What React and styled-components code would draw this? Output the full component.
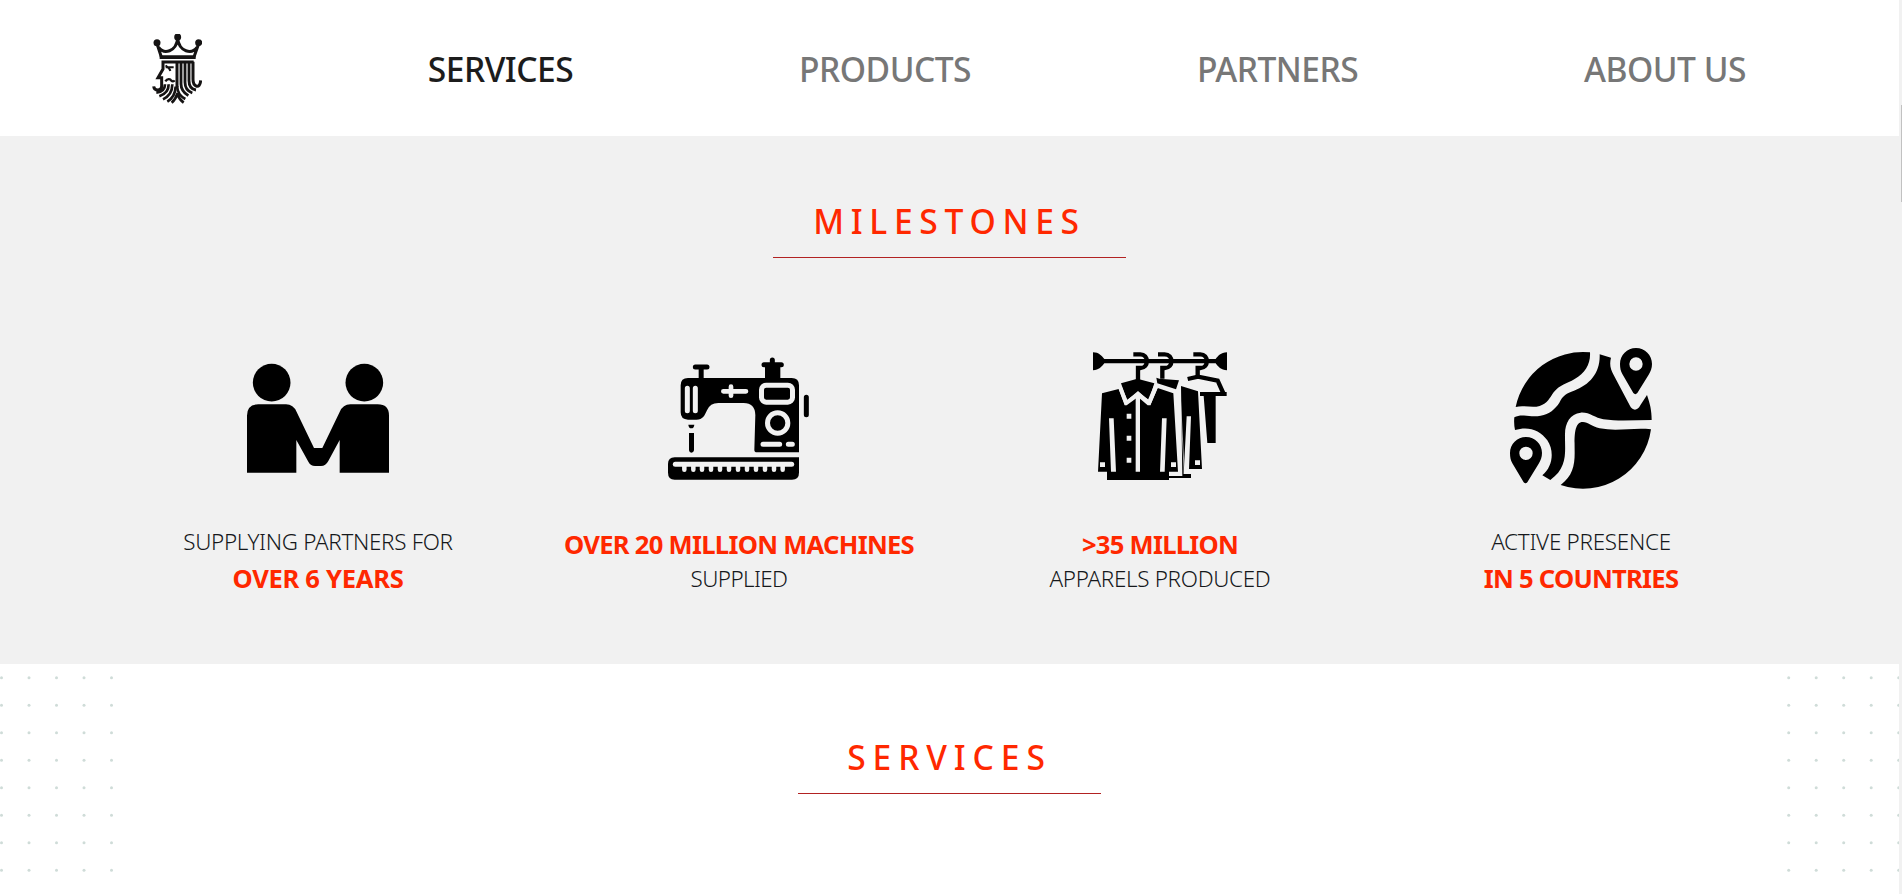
import React from "react";
import styled, { createGlobalStyle } from "styled-components";

const GlobalStyle = createGlobalStyle`
  * { box-sizing: border-box; }
  html, body { margin: 0; background: #fff; overflow: hidden; }
  body { font-family: "Noto Sans", "Open Sans", sans-serif; color: #15181b; }
`;

const Shell = styled.div`
  display: flex;
  width: 100%;
  height: 894px;
  overflow: hidden;
`;

const Page = styled.div`
  flex: 1;
  min-width: 0;
`;

const ScrollTrack = styled.div`
  width: 3px;
  flex: none;
  display: flex;
  justify-content: flex-end;
  padding-top: 105px;
  background: #f1f1f1;
`;

const ScrollThumb = styled.div`
  width: 1px;
  height: 97px;
  background: #c1c1c1;
`;

const Header = styled.header`
  display: flex;
  align-items: center;
  justify-content: space-between;
  height: 136px;
  padding: 2px 153px 0 152px;
  background: #fff;
`;

const NavLink = styled.a`
  font-size: 33.6px;
  font-weight: 500;
  line-height: 50px;
  letter-spacing: -0.5px;
  white-space: nowrap;
  color: ${(p) => (p.$active ? "#1c1c1c" : "#777")};
`;

const LogoSvg = styled.svg`
  display: block;
  width: 50px;
  height: 70px;
  flex: none;
`;

const Milestones = styled.section`
  display: flex;
  flex-direction: column;
  align-items: center;
  height: 528px;
  padding-top: 60px;
  background: #f1f1f1;
`;

const Title = styled.h2`
  width: ${(p) => p.$width}px;
  margin: 0;
  padding-bottom: 11px;
  border-bottom: 1px solid #b22222;
  font-size: 33.6px;
  font-weight: 500;
  line-height: 50px;
  letter-spacing: ${(p) => p.$spacing}px;
  text-align: center;
  white-space: nowrap;
  color: #ff2800;
`;

const Grid = styled.div`
  display: grid;
  grid-template-columns: repeat(4, 421px);
  margin-top: 82px;
`;

const Card = styled.div`
  display: flex;
  flex-direction: column;
  align-items: center;
`;

const IconSvg = styled.svg`
  display: block;
  width: 180px;
  height: 160px;
  margin-bottom: 26px;
`;

const Caption = styled.div`
  font-size: 22.4px;
  font-weight: 300;
  line-height: 32px;
  letter-spacing: ${(p) => p.$spacing ?? -0.3}px;
  white-space: nowrap;
`;

const Figure = styled.div`
  padding-top: ${(p) => (p.$second ? 3 : 1)}px;
  font-size: 25.6px;
  font-weight: 700;
  line-height: 36px;
  letter-spacing: ${(p) => p.$spacing}px;
  white-space: nowrap;
  color: #ff2800;
`;

const Services = styled.section`
  display: flex;
  justify-content: space-between;
  height: 230px;
  background: #fff;
`;

const ServicesBody = styled.div`
  flex: 1;
  display: flex;
  justify-content: center;
  align-items: flex-start;
  padding-top: 68px;
`;

const DotSvg = styled.svg`
  display: block;
  width: 115px;
  height: 230px;
  flex: none;
`;

const STEP = 27.5;

function Dots({ start }) {
  const dots = [];
  for (let r = 0; r < 8; r++)
    for (let c = 0; c < 5; c++)
      dots.push(<circle key={r + "-" + c} cx={start + c * STEP} cy={13.8 + r * STEP} r="1.5" />);
  return (
    <DotSvg viewBox="0 0 115 230" fill="#cfdcd8">
      {dots}
    </DotSvg>
  );
}

function Logo() {
  return (
    <LogoSvg viewBox="38 30 150 210" fill="none" stroke="#151313">
      <g fill="#151313" stroke="none">
        <circle cx="53" cy="56" r="10.5" />
        <circle cx="115" cy="39" r="10.5" />
        <circle cx="178" cy="56" r="10.5" />
        <path d="M61 94H169V105H61Z" />
      </g>
      <path d="M54 62L66 99M177 62L164 99M58 70C74 92 110 84 115 44C120 84 157 92 173 70" strokeWidth="9" />
      <path d="M163 114H71V135L56 161H67V187C66 202 45 202 43 187" strokeWidth="9" />
      <path d="M79 130H103M79 124C84 130 91 133 93 141" strokeWidth="6" />
      <path d="M78 172C84 163 93 164 96 170C99 173 103 173 106 169" strokeWidth="7" />
      <path d="M113 115V190" strokeWidth="9" />
      <path d="M125 115V180C125 198 134 207 147 215" strokeWidth="8.5" />
      <path d="M137 115V175C137 192 147 203 159 207" strokeWidth="8.5" />
      <path d="M149 115V170C149 187 157 196 170 198" strokeWidth="8.5" />
      <path d="M161 113V166C161 189 182 197 184 169" strokeWidth="9" />
      <path d="M77 181C77 194 69 204 51 206" strokeWidth="8" />
      <path d="M88 181C88 200 78 211 60 217" strokeWidth="8" />
      <path d="M99 181C99 204 88 218 71 226" strokeWidth="8" />
      <path d="M109 188C108 211 99 224 84 233" strokeWidth="8" />
      <path d="M113 186C115 208 123 217 138 225M115 207C110 223 104 230 97 236M115 211C119 224 126 231 133 236" strokeWidth="8" />
    </LogoSvg>
  );
}

function PeopleIcon() {
  return (
    <IconSvg viewBox="-6 -30 540 480">
      <circle cx="125" cy="98" r="56.5" />
      <circle cx="403" cy="98" r="56.5" />
      <path d="M51 368V197Q51 163 85 163H168Q190 163 200 186L252 294H277L329 186Q339 163 361 163H443Q477 163 477 197V368H329V270L295 333Q287 348 273 348H255Q242 348 235 335L199 270V368Z" />
    </IconSvg>
  );
}

function SewingIcon() {
  return (
    <IconSvg viewBox="-18 -15 540 480">
      <path d="M121 66H156M327 59H379M352 45V60M454 157V209" stroke="#000" strokeWidth="15" strokeLinecap="round" />
      <path d="M131 66H146V102H131ZM330 60H376V102H330Z" />
      <path d="M99 99H410Q432 99 432 121V322H306Q298 322 298 314L301 210Q300 174 266 174H190Q165 174 156 196C148 213 144 224 124 224H99Q77 224 77 202V121Q77 99 99 99Z" />
      <path d="M100 239H118Q117 250 109 250Q101 250 100 239ZM102 264H117V316Q116 323 109 323Q103 323 102 316Z" />
      <path d="M59 337H432V383Q432 404 411 404H59Q39 404 39 383V357Q39 337 59 337Z" />
      <g stroke="#f1f1f1" fill="none" strokeLinecap="round">
        <path d="M97 130V197M121 130V197" strokeWidth="15" />
        <path d="M205 139H273M228 125V152" strokeWidth="14" />
        <rect x="319.500" y="120.500" width="93" height="51" rx="14" strokeWidth="15" />
        <circle cx="368" cy="234" r="30.500" strokeWidth="15" />
        <path d="M324 298H374M400 298H412" strokeWidth="15" />
        <path d="M61 358H410" strokeWidth="15" />
        <path d="M88 362V374M115 362V374M141 362V374M168 362V374M195 362V374M222 362V374M249 362V374M276 362V374M303 362V374M330 362V374M357 362V374M383 362V374" strokeWidth="13.500" />
      </g>
    </IconSvg>
  );
}

function ClothesIcon() {
  return (
    <IconSvg viewBox="-30 0 540 480">
      <path d="M39 37C57 37 65 48 73 57H407C414 48 422 38 441 37V91C423 90 414 80 407 70H73C65 80 57 90 39 91Z" />
      <g fill="none" stroke="#000" strokeWidth="13">
        <path d="M160 43H181C207 43 207 84 181 84H174V120" />
        <path d="M234 43H254C281 43 281 84 254 84H247V116" />
        <path d="M340 43H361C387 43 387 84 361 84H353V108" />
        <path d="M323 117L354 110L413 122L431 162" />
      </g>
      <path d="M360 156H440V168H407V309H382L371 168H360Z" />
      <path d="M303 138L354 154L366 387H327L333 229H320L311 402H333V414H267V408H307Z" />
      <path d="M229 113L238 116L297 121L288 148L232 130Z" />
      <path d="M123 130L172 116L223 130L207 180L174 156L141 180Z" />
      <path d="M116 147L135 196L174 168L211 196L233 144L280 160L294 395H267V420H81V395H54L66 160Z" />
      <path d="M300 154L313 402M361 168L375 309" stroke="#f1f1f1" strokeWidth="2" />
      <g fill="#f1f1f1">
        <path d="M167 164H180V395H167ZM87 235H101L108 395H93ZM246 235H260L254 395H240Z" />
        <path d="M116 147L126 142L142 180L174 153L204 179L223 134L234 142L211 196H203L174 171L140 196H134Z" />
        <path d="M140 221H154V236H140ZM140 287H154V302H140ZM140 353H154V368H140ZM60 367H75V381H60ZM273 367H288V381H273ZM345 361H360V375H345Z" />
      </g>
    </IconSvg>
  );
}

function GlobeIcon() {
  return (
    <IconSvg viewBox="-27 0 540 480">
      <path d="M47 201A206 206 0 0 1 270 37C272 72 256 99 224 117C200 132 180 133 161 157C149 174 143 190 119 198C94 205 72 194 47 201Z" />
      <path d="M299 43L333 53C328 73 331 88 341 105L389 196C397 213 412 214 421 196L441 165C450 191 455 211 455 240C406 240 359 245 310 238C285 234 268 216 242 218C211 222 195 247 195 283C194 334 206 380 151 420L127 406C158 380 164 334 142 301C120 269 84 258 45 270Q41 251 43 232C66 219 92 234 122 227C148 222 165 208 178 188C189 165 199 161 222 152C269 134 301 99 299 43Z" />
      <path d="M453 268A206 206 0 0 1 182 435C217 408 224 379 224 339C224 302 219 245 249 246C264 247 275 259 299 265C352 275 402 262 453 268Z" />
      <path fillRule="evenodd" d="M408 24C435 24 456 45 456 72C456 85 452 94 446 104L412 159Q406 166 400 159L367 102C362 93 360 84 360 72C360 45 381 24 408 24ZM408 52A20 20 0 1 0 408 92A20 20 0 1 0 408 52Z" />
      <path fillRule="evenodd" d="M78 291C105 291 126 312 126 339C126 352 122 361 116 371L82 427Q77 433 71 427L37 370C32 361 30 352 30 339C30 312 51 291 78 291ZM78 320A20 20 0 1 0 78 360A20 20 0 1 0 78 320Z" />
    </IconSvg>
  );
}

export default function App() {
  return (
    <Shell>
      <GlobalStyle />
      <Page>
        <Header>
          <Logo />
          <NavLink $active>SERVICES</NavLink>
          <NavLink>PRODUCTS</NavLink>
          <NavLink>PARTNERS</NavLink>
          <NavLink>ABOUT US</NavLink>
        </Header>
        <Milestones>
          <Title $width={353} $spacing={6.7}>MILESTONES</Title>
          <Grid>
            <Card>
              <PeopleIcon />
              <Caption>SUPPLYING PARTNERS FOR</Caption>
              <Figure $second $spacing={-0.3}>OVER 6 YEARS</Figure>
            </Card>
            <Card>
              <SewingIcon />
              <Figure $spacing={-0.72}>OVER 20 MILLION MACHINES</Figure>
              <Caption $spacing={-0.6}>SUPPLIED</Caption>
            </Card>
            <Card>
              <ClothesIcon />
              <Figure $spacing={-0.75}>&gt;35 MILLION</Figure>
              <Caption>APPARELS PRODUCED</Caption>
            </Card>
            <Card>
              <GlobeIcon />
              <Caption $spacing={-0.25}>ACTIVE PRESENCE</Caption>
              <Figure $second $spacing={-0.75}>IN 5 COUNTRIES</Figure>
            </Card>
          </Grid>
        </Milestones>
        <Services>
          <Dots start={1.5} />
          <ServicesBody>
            <Title $width={303} $spacing={6.9}>SERVICES</Title>
          </ServicesBody>
          <Dots start={4.7} />
        </Services>
      </Page>
      <ScrollTrack>
        <ScrollThumb />
      </ScrollTrack>
    </Shell>
  );
}
